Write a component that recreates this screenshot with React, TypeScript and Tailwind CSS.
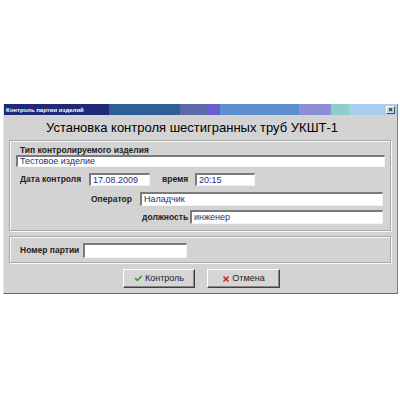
import { Check, X } from "lucide-react";

const sunken =
  "bg-white border-t-[2px] border-l-[2px] border-t-[#7a7a7a] border-l-[#7a7a7a] border-b border-r border-b-[#f4f4f4] border-r-[#f4f4f4] text-[#1f2d7a] text-[9px] font-normal leading-none flex items-center pl-[2px]";

const groupBox =
  "border border-t-[#a8a8a8] border-l-[#a8a8a8] border-b-[#fafafa] border-r-[#fafafa] shadow-[inset_-1px_-1px_0_#a8a8a8,inset_1px_1px_0_#fafafa]";

const App = () => {
  return (
    <div className="w-[400px] h-[400px] bg-white pt-[104px] pl-[3px] font-['Liberation_Sans',Arial,sans-serif]">
      <div className="w-[395px] h-[190px] bg-[#d3d3d3] border-l border-r border-b border-l-[#e8e8e8] border-r-[#808080] border-b-[#6a6a6a] flex flex-col">
        {/* title bar */}
        <div className="h-[11px] flex items-center justify-between pl-[2px] pr-[2px] bg-[linear-gradient(90deg,#1e2a78_0,#1e2a78_105px,#2f5e98_105px,#2f5e98_176px,#5d6aa8_176px,#5d6aa8_203px,#6a5fd0_203px,#6a5fd0_216px,#5b8fd0_216px,#5b8fd0_295px,#8c8ed8_295px,#8c8ed8_327px,#8ccfc8_327px,#8ccfc8_345px,#a8cef0_345px)]">
          <span className="text-white text-[6px] font-bold leading-none">Контроль партии изделий</span>
          <span className="w-[9px] h-[8px] bg-[#d3d3d3] border border-t-white border-l-white border-b-[#555] border-r-[#555] flex items-center justify-center text-[7px] font-bold leading-none text-black">
            ×
          </span>
        </div>

        <div className="pl-[42px] pt-[5px] h-[25px] text-[13px] text-black leading-[16px]">
          Установка контроля шестигранных труб УКШТ-1
        </div>

        <div className="px-[5px] flex flex-col gap-[4px]">
          {/* group 1 */}
          <div className={`${groupBox} h-[92px] px-[6px] pt-[4px] flex flex-col`}>
            <div className="pl-[4px] h-[10px] text-[8.5px] font-bold leading-[10px] text-[#222]">
              Тип контролируемого изделия
            </div>
            <div className={`${sunken} h-[12px] w-[369px]`}>Тестовое изделие</div>

            <div className="flex items-center h-[13px] mt-[6px] text-[8.5px] font-bold text-[#222]">
              <span className="pl-[4px] w-[73px]">Дата контроля</span>
              <div className={`${sunken} h-[13px] w-[61px]`}>17.08.2009</div>
              <span className="ml-[12px] w-[33px]">время</span>
              <div className={`${sunken} h-[13px] w-[60px]`}>20:15</div>
            </div>

            <div className="flex items-center h-[14px] mt-[6px] text-[8.5px] font-bold text-[#222]">
              <span className="ml-[75px] w-[49px]">Оператор</span>
              <div className={`${sunken} h-[14px] w-[243px]`}>Наладчик</div>
            </div>

            <div className="flex items-center h-[14px] mt-[4px] text-[8.5px] font-bold text-[#222]">
              <span className="ml-[126px] w-[48px]">должность</span>
              <div className={`${sunken} h-[14px] w-[193px]`}>инженер</div>
            </div>
          </div>

          {/* group 2 */}
          <div className={`${groupBox} h-[28px] px-[10px] flex items-center text-[8.5px] font-bold text-[#222]`}>
            <span className="w-[63px]">Номер партии</span>
            <div className={`${sunken} h-[15px] w-[104px]`}></div>
          </div>

          {/* buttons */}
          <div className="flex gap-[12px] pl-[114px] mt-[1px]">
            <button className="w-[72px] h-[19px] bg-[#d6d6d6] border border-t-white border-l-white border-b-[#404040] border-r-[#404040] shadow-[inset_-1px_-1px_0_#888] flex items-center justify-center gap-[2px] text-[9px] text-[#222] leading-none">
              <Check className="w-[9px] h-[9px] text-[#2f9a2f]" strokeWidth={4} />
              Контроль
            </button>
            <button className="w-[73px] h-[19px] bg-[#d6d6d6] border border-t-white border-l-white border-b-[#404040] border-r-[#404040] shadow-[inset_-1px_-1px_0_#888] flex items-center justify-center gap-[2px] text-[9px] text-[#222] leading-none">
              <X className="w-[8px] h-[8px] text-[#d02020]" strokeWidth={5} />
              Отмена
            </button>
          </div>
        </div>
      </div>
    </div>
  );
};

export default App;
